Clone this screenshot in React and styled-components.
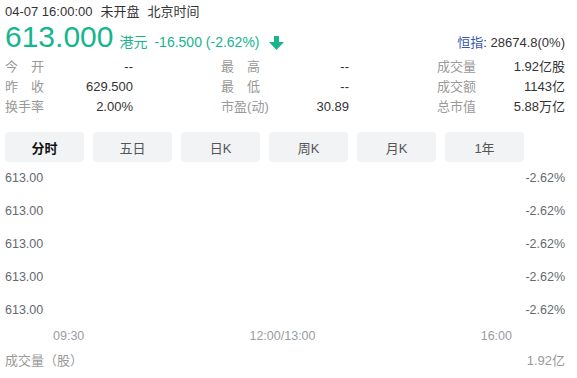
import React from "react";
import styled, { createGlobalStyle } from "styled-components";

const GREEN = "#17b58f";

const GlobalStyle = createGlobalStyle`
  body {
    margin: 0;
    background: #fff;
    color: #333;
    font-family: "Liberation Sans", "Noto Sans CJK SC", sans-serif;
  }
`;

const stats = [
  [
    { label: "今开", value: "--" },
    { label: "昨收", value: "629.500" },
    { label: "换手率", value: "2.00%" },
  ],
  [
    { label: "最高", value: "--" },
    { label: "最低", value: "--" },
    { label: "市盈(动)", value: "30.89" },
  ],
  [
    { label: "成交量", value: "1.92亿股" },
    { label: "成交额", value: "1143亿" },
    { label: "总市值", value: "5.88万亿" },
  ],
];

const tabs = ["分时", "五日", "日K", "周K", "月K", "1年"];

const ArrowDown = () => (
  <svg width="15" height="14" viewBox="0 0 15 14">
    <rect x="5" y="0" width="5" height="7" fill={GREEN} />
    <polygon points="0,6 15,6 7.5,14" fill={GREEN} />
  </svg>
);

const SpreadLabel = ({ text }) => (
  <Label>
    {[...text].map((ch, i) => (
      <span key={i}>{ch}</span>
    ))}
  </Label>
);

export default function App() {
  // stats are listed by column; render them row by row for the grid
  const rows = [0, 1, 2].flatMap((r) => stats.map((col) => col[r]));

  return (
    <Page>
      <GlobalStyle />
      <TopLine>
        04-07 16:00:00
        <Status>未开盘</Status>
        <Status>北京时间</Status>
      </TopLine>

      <PriceRow>
        <BigPrice>613.000</BigPrice>
        <Unit>港元</Unit>
        <Change>-16.500 (-2.62%)</Change>
        <ArrowBox>
          <ArrowDown />
        </ArrowBox>
        <Index>
          <IndexName>恒指</IndexName>: 28674.8(0%)
        </Index>
      </PriceRow>

      <StatsGrid>
        {rows.map((s) => (
          <Stat key={s.label}>
            <SpreadLabel text={s.label} />
            <Value>{s.value}</Value>
          </Stat>
        ))}
      </StatsGrid>

      <Tabs>
        {tabs.map((t, i) => (
          <Tab key={t} $active={i === 0}>
            {t}
          </Tab>
        ))}
      </Tabs>

      <Chart>
        {[0, 1, 2, 3, 4].map((i) => (
          <ChartRow key={i}>
            <span>613.00</span>
            <span>-2.62%</span>
          </ChartRow>
        ))}
      </Chart>

      <Axis>
        <span>09:30</span>
        <span>12:00/13:00</span>
        <span>16:00</span>
      </Axis>

      <VolumeRow>
        <span>成交量（股）</span>
        <span>1.92亿</span>
      </VolumeRow>
    </Page>
  );
}

const Page = styled.div`
  padding: 2px 12px 0 5px;
`;

const TopLine = styled.div`
  font-size: 13px;
  line-height: 20px;
  color: #333;
  white-space: nowrap;
`;

const Status = styled.span`
  margin-left: 8px;
`;

const PriceRow = styled.div`
  display: flex;
  align-items: baseline;
  height: 30px;
  line-height: 30px;
  white-space: nowrap;
`;

const BigPrice = styled.span`
  font-size: 30px;
  color: ${GREEN};
`;

const Unit = styled.span`
  font-size: 14px;
  margin-left: 6px;
  color: ${GREEN};
`;

const Change = styled.span`
  font-size: 14px;
  margin-left: 7px;
  color: ${GREEN};
`;

const ArrowBox = styled.span`
  display: flex;
  align-self: flex-end;
  margin: 0 0 2px 9px;
`;

const Index = styled.span`
  margin-left: auto;
  font-size: 13px;
  color: #333;
`;

const IndexName = styled.span`
  color: #3a57b0;
`;

const StatsGrid = styled.div`
  display: grid;
  grid-template-columns: repeat(3, 128px);
  justify-content: space-between;
  grid-auto-rows: 20px;
  margin-top: 5px;
  font-size: 13px;
  line-height: 20px;
`;

const Stat = styled.div`
  display: flex;
  justify-content: space-between;
  white-space: nowrap;
`;

const Label = styled.span`
  display: flex;
  justify-content: space-between;
  min-width: 39px;
  color: #999;
`;

const Value = styled.span`
  color: #333;
`;

const Tabs = styled.div`
  display: flex;
  gap: 9px;
  margin-top: 15px;
`;

const Tab = styled.div`
  width: 79px;
  height: 30px;
  display: flex;
  align-items: center;
  justify-content: center;
  background: #f2f3f5;
  border-radius: 4px;
  font-size: 13px;
  font-weight: ${(p) => (p.$active ? 700 : 400)};
  color: ${(p) => (p.$active ? "#111" : "#555")};
`;

const Chart = styled.div`
  display: flex;
  flex-direction: column;
  justify-content: space-between;
  height: 150px;
  margin-top: 7px;
`;

const ChartRow = styled.div`
  display: flex;
  justify-content: space-between;
  font-size: 12.5px;
  line-height: 18px;
  color: #666a70;
`;

const Axis = styled.div`
  display: flex;
  justify-content: space-between;
  padding: 0 53px 0 48px;
  margin-top: 8px;
  font-size: 12.5px;
  line-height: 18px;
  color: #9a9ca3;
`;

const VolumeRow = styled.div`
  display: flex;
  justify-content: space-between;
  margin-top: 7px;
  font-size: 13px;
  line-height: 18px;
  color: #999;
`;
